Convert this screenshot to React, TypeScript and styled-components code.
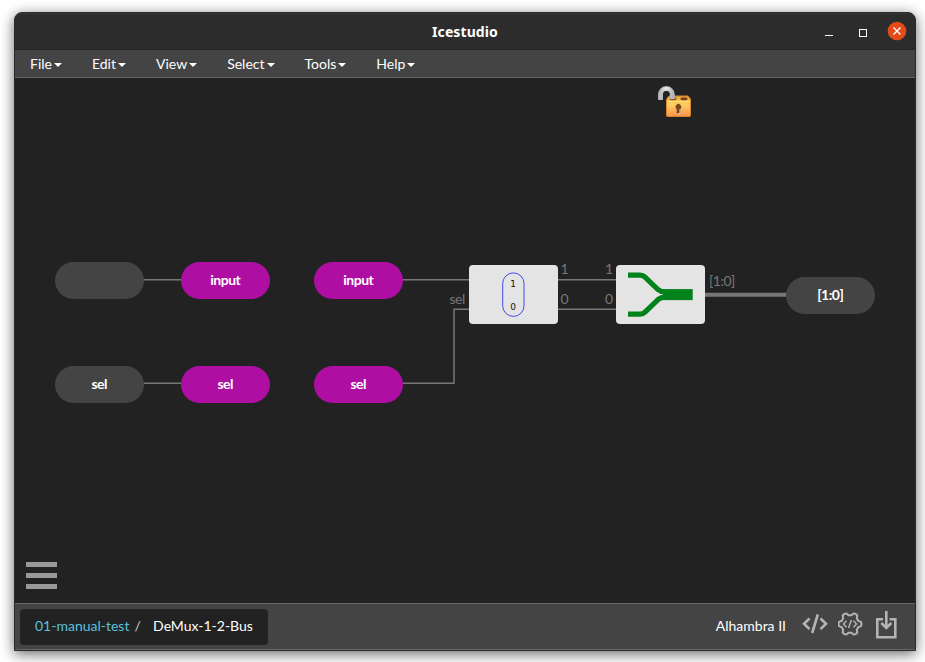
import React from "react";
import styled, { createGlobalStyle } from "styled-components";

const GlobalStyle = createGlobalStyle`
  * { box-sizing: border-box; }
  body { margin: 0; background: #fff; overflow: hidden; }
`;

const Desktop = styled.div`
  width: 925px;
  height: 662px;
  padding: 12px 9px 11px 14px;
  overflow: hidden;
  font-family: Lato, "Liberation Sans", sans-serif;
  font-size: 14px;
  color: #fff;
`;

const Window = styled.div`
  display: flex;
  flex-direction: column;
  width: 902px;
  height: 639px;
  border: 1px solid #2a2a2a;
  border-radius: 8px 8px 0 0;
  background: #222;
  box-shadow: 0 3px 14px rgba(0, 0, 0, 0.6);
`;

const TitleBar = styled.header`
  display: grid;
  grid-template-columns: 1fr auto 1fr;
  align-items: center;
  height: 37px;
  flex: none;
  background: #2c2c2c;
  border-top: 1px solid #383838;
  border-bottom: 1px solid #242424;
  border-radius: 7px 7px 0 0;
`;

const Title = styled.h1`
  grid-column: 2;
  margin: 0;
  font: 700 14px/20px "Noto Sans", sans-serif;
  letter-spacing: 0.1px;
`;

const WindowControls = styled.div`
  display: flex;
  justify-content: flex-end;
  align-items: center;
  padding-right: 8px;
  padding-bottom: 1px;
`;

const MenuBar = styled.nav`
  display: flex;
  height: 28px;
  flex: none;
  background: #444;
  border-bottom: 1px solid #666;
`;

const MenuItem = styled.a`
  display: flex;
  align-items: center;
  padding: 0 15px;
  line-height: 20px;
`;

const Caret = styled.span`
  margin-left: 2px;
  margin-top: 2px;
  border-top: 4px solid #fff;
  border-left: 4px solid transparent;
  border-right: 4px solid transparent;
`;

const Canvas = styled.main`
  position: relative;
  flex: 1;
  background: #222;
`;

const Wires = styled.svg`
  position: absolute;
  inset: 0;
  display: block;
`;

const Pill = styled.div<{ $x: number; $y: number; $virtual?: boolean }>`
  position: absolute;
  left: ${(p) => p.$x}px;
  top: ${(p) => p.$y}px;
  display: flex;
  align-items: center;
  justify-content: center;
  width: 88.5px;
  height: 37px;
  padding-bottom: 2px;
  border-radius: 19px;
  background: ${(p) => (p.$virtual ? "#ae0ea2" : "#444")};
  font-weight: 700;
  font-size: 14px;
  letter-spacing: -0.5px;
`;

const Block = styled.div<{ $x: number }>`
  position: absolute;
  left: ${(p) => p.$x}px;
  top: 187px;
  width: 88.5px;
  height: 59px;
  border-radius: 4px;
  background: #e4e4e4;

  svg { display: block; }
`;

const PortLabel = styled.span<{ $x: number; $y: number }>`
  position: absolute;
  left: ${(p) => p.$x}px;
  top: ${(p) => p.$y}px;
  color: #777;
  line-height: 18px;
  letter-spacing: -0.5px;
`;

const Lock = styled.svg`
  position: absolute;
  left: 641px;
  top: 7px;
`;

const Hamburger = styled.button`
  position: absolute;
  left: 11px;
  bottom: 14px;
  display: flex;
  flex-direction: column;
  gap: 6px;
  padding: 0;
  border: 0;
  background: none;
`;

const Bar = styled.span`
  width: 31px;
  height: 5px;
  background: #999;
`;

const Footer = styled.footer`
  display: flex;
  align-items: center;
  justify-content: space-between;
  height: 47px;
  flex: none;
  padding: 0 17px 0 5px;
  background: #444;
  border-top: 1px solid #666;
  border-bottom: 1px solid #666;
`;

const Breadcrumb = styled.div`
  display: flex;
  align-items: center;
  width: 248px;
  height: 36px;
  padding: 0 0 2px 15px;
  border-radius: 4px;
  background: #222;
  white-space: nowrap;
`;

const Crumb = styled.a`
  color: #5bc0de;
`;

const Slash = styled.span`
  color: #ccc;
  margin: 0 12.3px 0 5px;
`;

const Status = styled.div`
  display: flex;
  align-items: center;
  padding-bottom: 2px;
`;

const Board = styled.span`
  margin-right: 16px;
`;

const FooterIcon = styled.svg<{ $gap?: number }>`
  display: block;
  margin-left: ${(p) => p.$gap ?? 0}px;
  fill: none;
  stroke: #b4b4b4;
`;

const MENUS = ["File", "Edit", "View", "Select", "Tools", "Help"];

const PILLS = [
  { x: 40, y: 184, label: "" },
  { x: 166, y: 184, label: "input", virtual: true },
  { x: 299, y: 184, label: "input", virtual: true },
  { x: 40, y: 288, label: "sel" },
  { x: 166, y: 288, label: "sel", virtual: true },
  { x: 299, y: 288, label: "sel", virtual: true },
  { x: 771, y: 199, label: "[1:0]" },
];

const PORTS = [
  { x: 434.5, y: 212, label: "sel" },
  { x: 545.5, y: 182, label: "1" },
  { x: 545.5, y: 212, label: "0" },
  { x: 590, y: 182, label: "1" },
  { x: 590, y: 212, label: "0" },
  { x: 694, y: 194, label: "[1:0]" },
];

function Controls() {
  return (
    <WindowControls>
      <svg width="82" height="20" viewBox="0 0 82 20">
        <path d="M0 14.5h8" stroke="#fff" />
        <rect x="34.5" y="8.5" width="7" height="7" fill="none" stroke="#fff" />
        <circle cx="72" cy="10" r="9.3" fill="#e34b18" />
        <path d="M68.500 6.500l7 7M75.500 6.500l-7 7" stroke="#fff" strokeWidth="1.4" />
      </svg>
    </WindowControls>
  );
}

function OpenLock() {
  return (
    <Lock width="38" height="36" viewBox="0 0 38 36">
      <defs>
        <linearGradient id="body" x1="0" y1="0" x2="0" y2="1">
          <stop offset="0" stopColor="#dfa53d" />
          <stop offset=".2" stopColor="#f5c050" />
          <stop offset=".4" stopColor="#ffcf62" />
          <stop offset="1" stopColor="#ff934d" />
        </linearGradient>
        <linearGradient id="metal" x1="0" y1="0" x2="1" y2="0">
          <stop offset="0" stopColor="#bbb" />
          <stop offset=".5" stopColor="#e9eaec" />
          <stop offset="1" stopColor="#b5b7b9" />
        </linearGradient>
      </defs>
      <path d="M12 11.500L13.500 10.500h18.500l3 3.500V30q0 2-2 2H12q-2 0-2-2V14.500z" fill="#d8852d" />
      <path d="M12.500 12L14 11.500h17.500l2.500 3v15q0 1.500-1.500 1.500H12.500q-1.500 0-1.500-1.500V14.500z" fill="url(#body)" />
      <path d="M11 16.500h23" stroke="#ffe07b" />
      <ellipse cx="17" cy="13.800" rx="3.500" ry="1.500" fill="#8c5722" />
      <ellipse cx="28" cy="13.800" rx="3.600" ry="1.500" fill="#7c4314" />
      <path d="M4.500 15V9.500a5.800 5.800 0 0 1 11.800 0v4.500" fill="none" stroke="#a0a4a8" strokeWidth="5" />
      <path d="M4.500 14.500V9.500a5.800 5.800 0 0 1 11.800 0v4.500" fill="none" stroke="url(#metal)" strokeWidth="3.800" />
      <path d="M20 23.500a2.900 2.900 0 1 1 4.800 0L24 28.500h-3.300v-4z" fill="#78471e" />
      <path d="M24 24v4.500h-2" stroke="#e4ce9c" fill="none" />
    </Lock>
  );
}

function Diagram() {
  return (
    <>
      <Wires width="900" height="525" viewBox="0 0 900 525" fill="none" stroke="#777" strokeWidth="1.5">
        <path d="M128 201.750h39M387 201.750h68M128 305.250h39M387 305.250h52V231.250h16" />
        <path d="M542 201.750h60M542 231.250h60" />
        <path d="M689 216.700h83" strokeWidth="4" />
      </Wires>
      {PILLS.map((p) => (
        <Pill key={`${p.x}-${p.y}`} $x={p.x} $y={p.y} $virtual={p.virtual}>
          {p.label}
        </Pill>
      ))}
      <Block $x={454}>
        <svg width="88.5" height="59" viewBox="0 0 88.5 59">
          <rect x="33.700" y="7.900" width="21.300" height="43.500" rx="10.600" fill="none" stroke="#4646ee" />
          <g fill="#111" fontFamily="DejaVu Sans, sans-serif" fontSize="9" textAnchor="middle">
            <text x="44" y="22.300">1</text>
            <text x="44" y="45.200">0</text>
          </g>
        </svg>
      </Block>
      <Block $x={601}>
        <svg width="88.5" height="59" viewBox="0 0 88.5 59" fill="none" stroke="#02821b">
          <path d="M12 10.100h12q3 0 5 2l13 12.500q3 2.500 7 2.500M12 49.100h12q3 0 5-2l13-12.500q3-2.500 7-2.500" strokeWidth="5.200" />
          <path d="M47 29.600h29.700" strokeWidth="11" />
        </svg>
      </Block>
      {PORTS.map((p) => (
        <PortLabel key={`${p.x}-${p.y}`} $x={p.x} $y={p.y}>
          {p.label}
        </PortLabel>
      ))}
    </>
  );
}

function gearPath(cx: number, cy: number) {
  const points: string[] = [];
  for (let i = 0; i < 72; i++) {
    const a = (i / 72) * Math.PI * 2;
    const wave = Math.max(-1, Math.min(1, 1.7 * Math.cos(6 * a)));
    const r = 10.100 + 1.350 * wave;
    points.push(`${(cx + r * Math.cos(a)).toFixed(2)} ${(cy + r * Math.sin(a)).toFixed(2)}`);
  }
  return `M${points.join("L")}Z`;
}

export default function App() {
  return (
    <>
      <GlobalStyle />
      <Desktop>
        <Window>
          <TitleBar>
            <Title>Icestudio</Title>
            <Controls />
          </TitleBar>
          <MenuBar>
            {MENUS.map((m) => (
              <MenuItem key={m}>
                {m}
                <Caret />
              </MenuItem>
            ))}
          </MenuBar>
          <Canvas>
            <Diagram />
            <OpenLock />
            <Hamburger aria-label="Toggle panel">
              <Bar />
              <Bar />
              <Bar />
            </Hamburger>
          </Canvas>
          <Footer>
            <Breadcrumb>
              <Crumb>01-manual-test</Crumb>
              <Slash>/</Slash>
              <span>DeMux-1-2-Bus</span>
            </Breadcrumb>
            <Status>
              <Board>Alhambra II</Board>
              <FooterIcon width="26" height="28" viewBox="0 0 26 28" strokeWidth="2.600">
                <path d="M7.500 6.500L2 11.800l5.500 5.300M18.500 6.500l5.500 5.300-5.500 5.300M15.800 2.500L10.200 21" />
              </FooterIcon>
              <FooterIcon $gap={10} width="26" height="28" viewBox="0 0 26 28" strokeWidth="2">
                <path d={gearPath(12, 12)} strokeLinejoin="round" />
                <path d="M8.500 8.800l-3 3.200 3 3.200M15.500 8.800l3 3.200-3 3.200M13.500 8l-3 8" strokeWidth="1.500" />
              </FooterIcon>
              <FooterIcon $gap={11} width="23" height="30" viewBox="0 0 23 30" strokeWidth="2.600">
                <path d="M8 8.300H2.300v18h18v-18h-5.700" />
                <path d="M11.300 0v16.500M6.300 12l5 5 5-5" />
              </FooterIcon>
            </Status>
          </Footer>
        </Window>
      </Desktop>
    </>
  );
}
